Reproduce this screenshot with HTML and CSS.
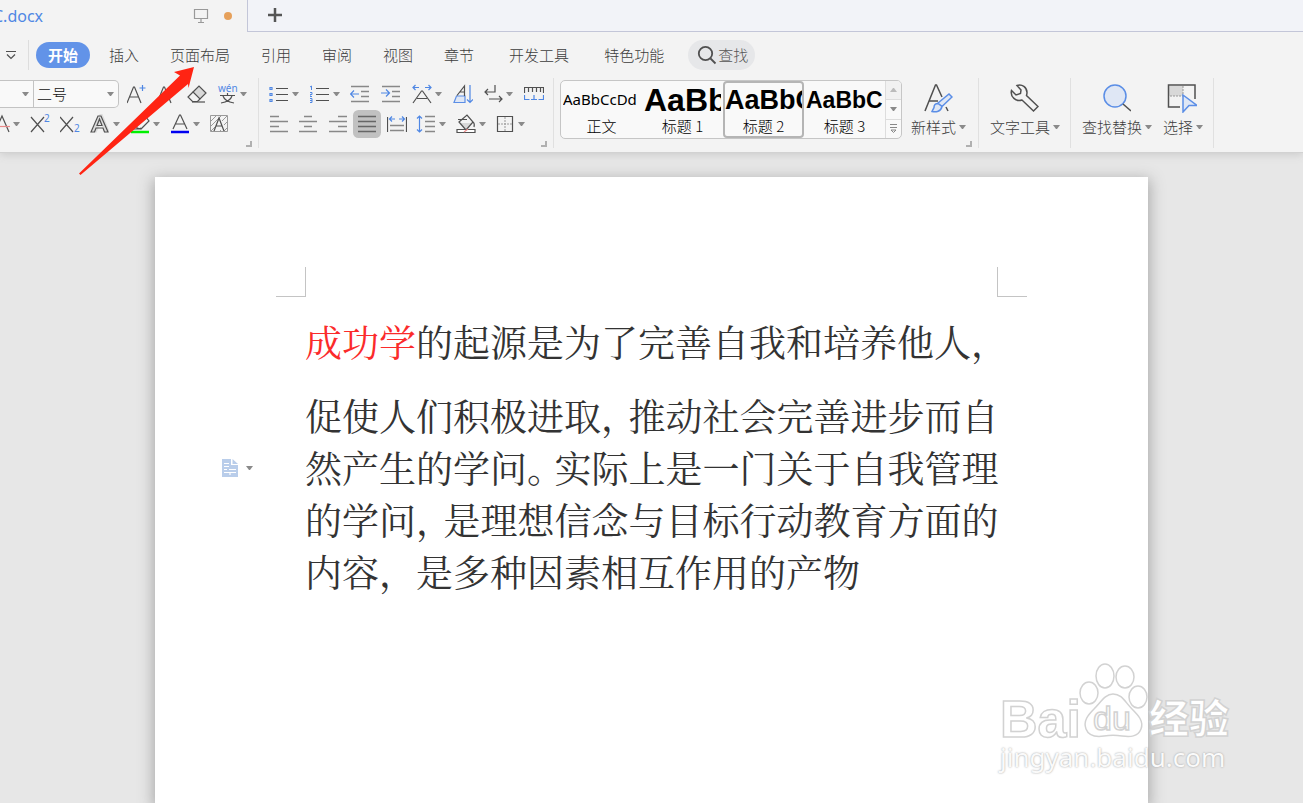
FILE: index.html
```
<!DOCTYPE html>
<html lang="zh-CN">
<head>
<meta charset="UTF-8">
<meta name="viewport" content="width=device-width, initial-scale=1">
<title>docx</title>
<link rel="stylesheet" href="styles.css">
</head>
<body>
<header class="tabbar">
	<div class="doc-tab">
		<span class="doc-name">C.docx</span>
		<svg class="screen" width="16" height="16" viewBox="0 0 16 16"><path d="M1.5 1.5h13v9h-13zM8 11v3M5 14.5h6"/></svg>
		<span class="unsaved"></span>
	</div>
	<div class="tab-rest">
		<button class="new-tab" aria-label="+"><svg width="16" height="16" viewBox="0 0 16 16"><path d="M8 1v14M1 8h14"/></svg></button>
	</div>
</header>

<nav class="menu">
	<button class="more" aria-label="▾"><svg width="10" height="10" viewBox="0 0 10 10"><path d="M0 1.500h10M1 4.500l4 4 4-4"/></svg></button>
	<button class="active">开始</button>
	<button>插入</button>
	<button>页面布局</button>
	<button>引用</button>
	<button>审阅</button>
	<button>视图</button>
	<button>章节</button>
	<button class="wide">开发工具</button>
	<button class="wide">特色功能</button>
	<button class="search"><svg width="20" height="20" viewBox="0 0 20 20"><circle cx="8.500" cy="8.500" r="6.700"/><path d="M13.500 13.500l5 5"/></svg>查找</button>
</nav>

<div class="ribbon">
	<section class="group font-group">
		<div class="row">
			<div class="combos">
				<span class="combo family"><i class="caret"></i></span>
				<label class="combo size"><select aria-label="二号"><option>二号</option></select><i class="caret"></i></label>
			</div>
			<button><svg class="ico" viewBox="0 0 20 20"><path d="M0 19L6.500 3h1L14 19M2.500 13h9"/><path class="b" d="M15.500 1v6M12.500 4h6"/></svg></button>
			<button><svg class="ico" viewBox="0 0 20 20"><path d="M0 19L6.500 3h1L14 19M2.500 13h9"/><path class="b" d="M13 4h5"/></svg></button>
			<button><svg class="ico" viewBox="0 0 20 20"><path d="M5 18h13"/><path class="g" d="M6 8l6-6 7 7-6 6z"/><path d="M6 8l-5 5 4.500 4.500h5L13 15"/></svg></button>
			<button class="drop"><svg class="ico wen" viewBox="0 0 20 20"><text class="tb" x="1" y="8" font-size="10">wén</text><path d="M3 11.500h15M10.500 9v2.500M6 12c1 3 5 6 11 7M15 12c-1 3-5 6-11 7"/></svg><i class="caret"></i></button>
		</div>
		<div class="row second">
			<button class="drop"><svg class="ico" viewBox="0 0 20 20"><path d="M5 18L12 2l7 16"/><path class="r" d="M0 12.500h20"/></svg><i class="caret"></i></button>
			<button><svg class="ico" viewBox="0 0 20 20"><path d="M1 3l13 15M14 3L1 18"/><text class="tb" x="14" y="8" font-size="10">2</text></svg></button>
			<button><svg class="ico" viewBox="0 0 20 20"><path d="M0 3l13 15M13 3L0 18"/><text class="tb" x="14" y="18" font-size="10">2</text></svg></button>
			<button class="drop"><svg class="ico" viewBox="0 0 20 20"><path class="halo" d="M4 18L11 3l6 15"/><path d="M1 18L8 2h3l7 16h-3.500l-1.500-4H6l-1.500 4zM7 11.500h5L9.500 5z"/></svg><i class="caret"></i></button>
			<button class="drop"><svg class="ico" viewBox="0 0 20 20"><path d="M6 9l9-7 4 5-8 8-4-1zM6 9l-1 4-4 2h8l2-1"/><path class="green" d="M1 18h18"/></svg><i class="caret"></i></button>
			<button class="drop"><svg class="ico" viewBox="0 0 20 20"><path d="M3 15L9.500 1h1L17 15M5 10h10"/><path class="blue" d="M1 18h18"/></svg><i class="caret"></i></button>
			<button><svg class="ico" viewBox="0 0 20 20"><path class="lt" d="M1 7l5-5M1 12L11 2M1 17l4-4M12 7l5-5M14 11l3-3M9 18l2-2M14 17l3-3"/><path d="M4 17L9 4l5 13M6 12h6"/><path class="lt" d="M.5 1.500h17v16H.5z"/></svg></button>
		</div>
		<i class="corner"></i>
	</section>

	<section class="group para-group">
		<div class="row">
			<button class="drop"><svg class="ico" viewBox="0 0 20 20"><path d="M7 4.500h12M7 10.500h12M7 16.500h12"/><path class="b" d="M1 3.500h2v2H1zM1 9.500h2v2H1zM1 15.500h2v2H1z"/></svg><i class="caret"></i></button>
			<button class="drop"><svg class="ico" viewBox="0 0 20 20"><path d="M6 4.500h13M6 10.500h13M6 16.500h13"/><path class="b thin" d="M0 3l1.500-1v4M0 8.500h2v2H0v2h2M0 14.500h2v4H0M0 16.500h2"/></svg><i class="caret"></i></button>
			<button><svg class="ico" viewBox="0 0 20 20"><path class="gr" d="M1 2.500h18M11 7.500h8M11 12.500h8M1 17.500h18"/><path class="b" d="M9 10H1M4 6.500L.5 10 4 13.500"/></svg></button>
			<button><svg class="ico" viewBox="0 0 20 20"><path class="gr" d="M1 2.500h18M11 7.500h8M11 12.500h8M1 17.500h18"/><path class="b" d="M0 9h8M5 5.500L8.500 9 5 12.500"/></svg></button>
			<button class="drop"><svg class="ico" viewBox="0 0 20 20"><path d="M1 19L9.500 7h1L19 19M5 14.500h10"/><path class="b" d="M7 3.500H1M3.500 1L1 3.500 3.500 6M13 3.500h6M16.500 1L19 3.500 16.500 6"/></svg><i class="caret"></i></button>
			<button><svg class="ico" viewBox="0 0 20 20"><path class="lb" d="M3.500 12H12v6.500H1z"/><path d="M4 11.500L11.500 2v10M7 8h4"/><path class="b" d="M17 1v17M14 15.500l3 3 3-3"/></svg></button>
			<button class="drop"><svg class="ico" viewBox="0 0 20 20"><path d="M12 1v7H2M5 5L2 8l3 3M6 15h13M16 12l3 3-3 3"/></svg><i class="caret"></i></button>
			<button><svg class="ico" viewBox="0 0 20 20"><path d="M.5 9V3.500h19V9M4.500 4v4M8.500 4v4M12.500 4v4M16.500 4v4"/><path class="b" d="M.5 11v4.500h5M7 15.500h6M10 11v4.500M14.500 15.500h5V11"/></svg></button>
		</div>
		<div class="row second">
			<button><svg class="ico" viewBox="0 0 20 20"><path class="gr" d="M1 2.500h9M1 7.500h18M1 12.500h9M1 17.500h18"/></svg></button>
			<button><svg class="ico" viewBox="0 0 20 20"><path class="gr" d="M6 2.500h8M1 7.500h18M6 12.500h8M1 17.500h18"/></svg></button>
			<button><svg class="ico" viewBox="0 0 20 20"><path class="gr" d="M10 2.500h9M1 7.500h18M10 12.500h9M1 17.500h18"/></svg></button>
			<button class="pressed"><svg class="ico" viewBox="0 0 20 20"><path class="dk" d="M1 2.500h18M1 7.500h18M1 12.500h18M1 17.500h18"/></svg></button>
			<button><svg class="ico" viewBox="0 0 20 20"><path d="M.5 3v15M19.500 3v15"/><path class="gr" d="M3 11.500h14M3 16.500h14"/><path class="b" d="M8 5H3M5 2.500L2.500 5 5 7.500M12 5h5M15 2.500L17.500 5 15 7.500"/></svg></button>
			<button class="drop"><svg class="ico" viewBox="0 0 20 20"><path class="gr" d="M9 2.500h10M9 7.500h10M9 12.500h10M9 17.500h10"/><path class="b" d="M3.500 2v16M1 4.500L3.500 2 6 4.500M1 15.500L3.500 18 6 15.500"/></svg><i class="caret"></i></button>
			<button class="drop"><svg class="ico" viewBox="0 0 20 20"><path class="gf" d="M4 9h12l-6 6z"/><path d="M3 8l8-7 6 7-7 8zM2 5.500h9M17 8c1.500 1 1.500 3 1 5"/><path class="wh" d="M1 15.500h18v3H1z"/><path class="r" d="M8 18l4-3"/></svg><i class="caret"></i></button>
			<button class="drop"><svg class="ico" viewBox="0 0 20 20"><path d="M2.500 2.500h15v15h-15z"/><path class="lt dash" d="M10 3v14M3 10h14"/></svg><i class="caret"></i></button>
		</div>
		<i class="corner"></i>
	</section>

	<section class="group style-group">
		<div class="gallery">
			<button class="style"><span class="preview p0">AaBbCcDd</span><span>正文</span></button>
			<button class="style"><span class="preview p1">AaBb</span><span>标题 1</span></button>
			<button class="style selected"><span class="preview p2">AaBbC</span><span>标题 2</span></button>
			<button class="style"><span class="preview p3">AaBbCc</span><span>标题 3</span></button>
			<div class="scroller">
				<button class="off" aria-label="▴"><i class="caret up"></i></button>
				<button aria-label="▾"><i class="caret"></i></button>
				<button aria-label="▾"><svg width="7" height="9" viewBox="0 0 7 9"><path d="M0 .5h7M0 3.500h7"/><path d="M1 6h5L3.500 8.500z"/></svg></button>
			</div>
		</div>
		<button class="big">
			<svg width="30" height="30" viewBox="0 0 30 30"><path d="M2 28L12.500 2h1l5.500 12M6 18h9M23 24l2 4"/><path class="lb" d="M15 20L26 11l3 3-10 9.500zM15 20.500c-3 0-4 2-4 4l-2 4c4 1 9 0 10-5z"/></svg>
			<span>新样式<i class="caret"></i></span>
		</button>
		<i class="corner"></i>
	</section>

	<section class="group tool-group">
		<button class="big">
			<svg width="30" height="30" viewBox="0 0 30 30"><path d="M8 2.500c5-2 10 2 10 7 0 1-.2 2-.5 3L29 23.500 24.500 28 13 17C7 19 1 14 2.500 7.500L7 12l4.500-1.500L12 7z"/></svg>
			<span>文字工具<i class="caret"></i></span>
		</button>
	</section>

	<section class="group edit-group">
		<button class="big">
			<svg width="30" height="30" viewBox="0 0 30 30"><circle class="lb" cx="14" cy="13" r="11"/><path d="M22 21l8 7"/></svg>
			<span>查找替换<i class="caret"></i></span>
		</button>
		<button class="big">
			<svg width="30" height="30" viewBox="0 0 30 30"><path class="gf" d="M2 3h14v10H2z"/><path d="M13 24H1.500V2H28v14"/><path class="lt dash" d="M16 3v10M3 13h13"/><path class="lb" d="M16 12l14 10.500h-8L16 29z"/></svg>
			<span>选择<i class="caret"></i></span>
		</button>
	</section>
</div>

<main class="workspace">
	<article class="paper">
		<div class="marks"><i class="mark-left"></i><i class="mark-right"></i></div>
		<p class="lead"><span class="red">成功学</span>的起源是为了完善自我和培养他人，</p>
		<p>促使人们积极进取<span class="punct">，</span>推动社会完善进步而自<br>然产生的学问<span class="punct">。</span>实际上是一门关于自我管理<br>的学问<span class="punct">，</span>是理想信念与目标行动教育方面的<br>内容，是多种因素相互作用的产物</p>
		<button class="para-tool" aria-label="▾"><svg width="16" height="18" viewBox="0 0 16 18"><path class="sheet" d="M0 0h9v6h7v12H0z"/><path class="sheet" d="M10.500 0L16 5h-5.500z"/><path class="ln" d="M2 4.500h5M2 7.500h5M2 10.500h3M7 10.500h7M2 13.500h12M8 13v3"/></svg><i class="caret"></i></button>
	</article>
</main>

<svg class="arrow" width="120" height="112" viewBox="0 0 120 112"><path d="M117 4L97 9l6 3.500L2 110.500l1.500 1.500L111 21l.5 4z"/></svg>

<div class="watermark">
	<svg width="232" height="80" viewBox="0 0 232 80">
		<text class="wb" x="0" y="75" font-size="52" font-weight="700">Bai</text>
		<ellipse cx="89" cy="31" rx="9" ry="11"/>
		<ellipse cx="105" cy="14" rx="9" ry="12"/>
		<ellipse cx="125" cy="15" rx="9" ry="11"/>
		<ellipse cx="138" cy="35" rx="9" ry="11"/>
		<path d="M113 32c-8 0-12 8-19 15-6 6-11 12-8 20 3 8 11 8 18 7 7-1 11-1 18 0 8 1 16 1 19-7 3-8-3-14-9-20-7-7-10-15-19-15z"/>
		<text class="wd" x="93" y="68" font-size="34">du</text>
		<text class="wc" x="149" y="71" font-size="40" font-weight="900">经验</text>
	</svg>
	<span>jingyan.baidu.com</span>
</div>
</body>
</html>
```
FILE: styles.css
```
* {
	box-sizing: border-box;
}
body {
	margin: 0;
	min-height: 100vh;
	display: flex;
	flex-direction: column;
	position: relative;
	overflow: hidden;
	background: #e7e7e7;
	color: #3c3c3c;
	font: 15px/20px "Noto Sans CJK SC", sans-serif;
	font-weight: 300;
}
button {
	border: 0;
	padding: 0;
	background: none;
	color: inherit;
	font: inherit;
	white-space: nowrap;
}
svg {
	display: block;
	flex: none;
	fill: none;
	stroke: #505050;
	stroke-width: 1.2;
}

/* tabs */
.tabbar {
	display: flex;
	height: 32px;
	background: #f3f3f3;
}
.doc-tab {
	display: flex;
	align-items: center;
	width: 247px;
	padding-right: 15px;
}
.doc-name {
	flex: 1;
	margin-left: -7px;
	color: #4f87e4;
	font-family: "Noto Sans", "Noto Sans CJK SC", sans-serif;
	font-size: 16px;
	font-weight: 400;
}
.screen {
	stroke: #999;
}
.unsaved {
	width: 8px;
	height: 8px;
	margin-left: 15px;
	border-radius: 50%;
	background: #e6a05a;
}
.tab-rest {
	flex: 1;
	border-left: 1px solid #c3c6d8;
	border-bottom: 1px solid #c3c6d8;
	background: #f2f3f8;
}
.new-tab {
	margin: 7px 19px;
}
.new-tab svg {
	stroke: #555;
	stroke-width: 2.5;
}

/* menu */
.menu {
	position: relative;
	z-index: 1;
	display: flex;
	align-items: center;
	height: 46px;
	gap: 31px;
	background: #f3f3f3;
}
.more {
	height: 30px;
	padding: 0 12px 0 6px;
	margin-right: -24px;
	border-right: 1px solid #ddd;
}
.active {
	height: 26px;
	padding: 0 12px;
	margin-right: -12px;
	border-radius: 13px;
	background: #6293e8;
	color: #fff;
	font-weight: 700;
}
.wide {
	margin-left: 4px;
}
.search {
	display: flex;
	align-items: center;
	height: 30px;
	padding: 0 7px 0 9px;
	margin-left: -7px;
	gap: 1px;
	border-radius: 15px;
	background: #e6e7e9;
	color: #555;
}
.search svg {
	stroke-width: 1.8;
}

/* ribbon */
.ribbon {
	display: flex;
	height: 75px;
	border-bottom: 1px solid #d2d2d2;
	background: #f3f3f3;
	box-shadow: 0 2px 8px #ccc;
	position: relative;
}
.group {
	position: relative;
	flex: none;
	height: 70px;
	border-right: 1px solid #e0e0e0;
}
.row {
	display: flex;
	align-items: center;
	height: 30px;
	gap: 10px;
	margin-top: 1px;
}
.second {
	margin-top: 0;
}
.ico {
	width: 20px;
	height: 20px;
}
.drop {
	display: flex;
	align-items: center;
	gap: 3px;
}
.caret {
	display: inline-block;
	flex: none;
	width: 7px;
	height: 4px;
	border: 3px solid transparent;
	border-top: 4px solid #8a8a8a;
	border-bottom: 0;
}
.up {
	border-top: 0;
	border-bottom: 4px solid #bbb;
}
.corner {
	position: absolute;
	right: 6px;
	bottom: 1px;
	width: 6px;
	height: 6px;
	border-right: 2px solid #b0b0b0;
	border-bottom: 2px solid #b0b0b0;
}
.b { stroke: #4f87e4; }
.gr { stroke: #888; stroke-width: 1.5; }
.dk { stroke: #666; stroke-width: 1.5; }
.lt { stroke: #999; stroke-width: 1; }
.thin { stroke-width: 1; }
.r { stroke: #e98a8a; }
.g { fill: #d8d8d8; }
.gf { fill: #d8d8d8; stroke: none; }
.wh { fill: #fff; }
.lb { fill: #dfe7f5; stroke: #5b8ee6; }
.halo { stroke: #ddd; stroke-width: 5; }
.green { stroke: #00f000; stroke-width: 2.5; }
.blue { stroke: #0000f0; stroke-width: 2.5; }
.dash { stroke-dasharray: 2 1; }
.tb {
	fill: #4f87e4;
	stroke: none;
	font-family: "Noto Sans", sans-serif;
	font-weight: 400;
}
.wen {
	overflow: visible;
}

.font-group {
	width: 259px;
}
.font-group .second {
	margin-left: -10px;
}
.combos {
	display: flex;
	width: 119px;
	height: 28px;
	margin-right: -2px;
	border: 1px solid #c3c3c3;
	border-left: 0;
	border-radius: 0 5px 5px 0;
	background: #f9f9f9;
}
.combo {
	display: flex;
	align-items: center;
	justify-content: flex-end;
	padding-right: 4px;
}
.family {
	width: 34px;
	border-right: 1px solid #c3c3c3;
}
.size {
	flex: 1;
}
.size select {
	flex: 1;
	padding: 0 3px;
	border: 0;
	appearance: none;
	background: none;
	color: #111;
	font: inherit;
}
.para-group {
	width: 295px;
	padding: 0 9px 0 10px;
}
.para-group .row {
	justify-content: space-between;
	gap: 0;
}
.para-group .second {
	margin-right: 19px;
}
.pressed {
	border-radius: 2px;
	background: #c1c1c1;
	box-shadow: 0 0 0 4px #c1c1c1;
}

.style-group {
	display: flex;
	width: 425px;
	padding: 2px 0 0 6px;
}
.gallery {
	display: flex;
	width: 342px;
	height: 59px;
	border: 1px solid #c6c6c6;
	border-radius: 5px;
	background: #f9f9f9;
	overflow: hidden;
}
.style {
	display: flex;
	flex-direction: column;
	align-items: center;
	width: 81px;
	height: 57px;
	padding: 0 2px;
	color: #000;
	overflow: hidden;
}
.preview {
	width: 100%;
	height: 35px;
	overflow: hidden;
	line-height: 38px;
	text-align: left;
}
.selected {
	border: 2px solid #b5b5b5;
	border-radius: 4px;
	padding: 0;
}
.selected .preview {
	height: 33px;
	line-height: 34px;
}
.p0 {
	font-family: "Noto Sans", sans-serif;
	font-size: 15px;
	font-weight: 400;
	line-height: 36px;
}
.p1, .p2, .p3 {
	font-family: "Liberation Sans", sans-serif;
	font-weight: 700;
}
.p1 { font-size: 32px; }
.p2 { font-size: 27px; }
.p3 { font-size: 23px; }
.scroller {
	display: flex;
	flex-direction: column;
	flex: 1;
	border-left: 1px solid #ddd;
}
.scroller button {
	display: flex;
	align-items: center;
	justify-content: center;
	flex: 1;
	border-bottom: 1px solid #ddd;
}
.scroller button:last-child {
	border-bottom: 0;
}
.scroller .off {
	background: #f1f1f1;
}
.scroller svg {
	stroke: #888;
	stroke-width: 1;
}
.big {
	display: flex;
	flex-direction: column;
	align-items: center;
	padding-top: 5px;
	gap: 4px;
	height: 64px;
}
.big > svg {
	stroke-width: 1.5;
	margin-right: 2px;
}
.big span {
	display: flex;
	align-items: center;
	gap: 3px;
}
.style-group .big {
	margin: -2px 0 0 9px;
}
.tool-group {
	width: 92px;
	padding-left: 11px;
}
.edit-group {
	display: flex;
	gap: 11px;
	width: 143px;
	padding-left: 11px;
}

/* document */
.workspace {
	flex: 1;
	display: flex;
	padding-top: 24px;
}
.paper {
	position: relative;
	width: 993px;
	max-width: 100%;
	margin: 0 auto;
	padding: 90px 150px 0 150px;
	background: #fff;
	box-shadow: 0 4px 14px 2px #aaa;
	color: #333;
	font-family: "Noto Serif CJK SC", "Noto Sans CJK SC", serif;
	font-size: 37px;
	font-weight: 400;
	line-height: 52px;
}
.paper p {
	margin: 0;
	white-space: nowrap;
}
.paper .lead {
	margin: 18px 0 22px;
}
.red {
	color: #fb2b2b;
}
/* punctuation inside a full line is set tighter */
.punct {
	margin-right: 9px;
	font-feature-settings: "halt";
}
.marks {
	display: flex;
	justify-content: space-between;
	height: 30px;
	margin: 0 -29px;
}
.marks i {
	width: 30px;
	border-bottom: 1px solid #c4c4c4;
}
.mark-left {
	border-right: 1px solid #c4c4c4;
}
.mark-right {
	border-left: 1px solid #c4c4c4;
}
.para-tool {
	position: absolute;
	left: 67px;
	top: 282px;
	display: flex;
	align-items: center;
	gap: 8px;
}
.sheet {
	fill: #b9cdea;
	stroke: none;
}
.ln {
	stroke: #fff;
}

/* overlays */
.arrow {
	position: absolute;
	z-index: 2;
	left: 77px;
	top: 63px;
	fill: #ff2413;
	stroke: none;
	pointer-events: none;
}
.watermark {
	position: absolute;
	left: 1000px;
	top: 662px;
	pointer-events: none;
	color: #fafafa;
	font: 26px/30px "Noto Sans", sans-serif;
	text-shadow: 0 0 2px #999;
}
.watermark svg {
	overflow: visible;
	fill: #fff;
	stroke: #d2d2d2;
	stroke-width: 1.5;
	text-shadow: none;
}
.watermark text {
	font-family: "Liberation Sans", "Noto Sans CJK SC", sans-serif;
}
```
